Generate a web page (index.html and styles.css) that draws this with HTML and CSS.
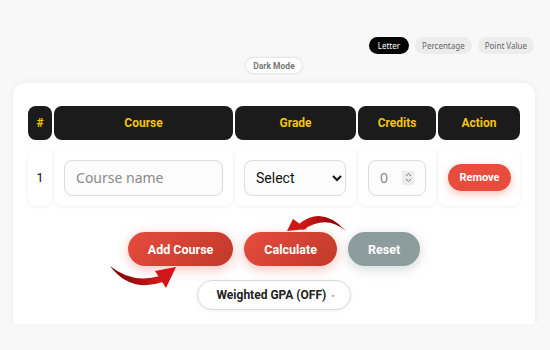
FILE: index.html
```html
<!DOCTYPE html>
<html>
<head>
  <meta charset="UTF-8">
  <title>GPA Calculator</title>
  <link rel="stylesheet" href="styles.css">
</head>
<body>
  <div class="modes">
    <button class="mode active">Letter</button>
    <button class="mode">Percentage</button>
    <button class="mode">Point Value</button>
  </div>
  <div class="theme-row">
    <button class="theme">Dark Mode</button>
  </div>

  <div class="card">
    <table class="courses">
      <thead>
        <tr>
          <th class="col-num">#</th>
          <th class="col-course">Course</th>
          <th class="col-grade">Grade</th>
          <th class="col-credits">Credits</th>
          <th class="col-action">Action</th>
        </tr>
      </thead>
      <tbody>
        <tr>
          <td class="num">1</td>
          <td><input class="field name" type="text" placeholder="Course name"></td>
          <td>
            <select class="field grade">
              <option>Select</option>
              <option>A</option>
              <option>B</option>
              <option>C</option>
            </select>
          </td>
          <td>
            <div class="field credits">
              <span class="credits-val">0</span>
              <span class="spin">
                <svg width="7" height="11" viewBox="0 0 7 11"><path d="M1 4 L3.5 1.5 L6 4 M1 7 L3.5 9.5 L6 7" fill="none" stroke="#777" stroke-width="1"/></svg>
              </span>
            </div>
          </td>
          <td class="act"><button class="remove">Remove</button></td>
        </tr>
      </tbody>
    </table>

    <div class="actions">
      <button class="btn red">Add Course</button>
      <button class="btn red">Calculate</button>
      <button class="btn gray">Reset</button>
    </div>
    <div class="weighted-row">
      <button class="weighted">Weighted GPA (OFF) <span class="dot">•</span></button>
    </div>

    <!-- hint arrows drawn over the buttons -->
    <svg class="arrows" viewBox="13 83 522 241" width="522" height="241">
      <defs>
        <linearGradient id="ar" x1="0" y1="0" x2="1" y2="0">
          <stop offset="0" stop-color="#7a0000"/>
          <stop offset="1" stop-color="#d81b1b"/>
        </linearGradient>
        <linearGradient id="ar2" x1="1" y1="0" x2="0" y2="0">
          <stop offset="0" stop-color="#7a0000"/>
          <stop offset="1" stop-color="#d81b1b"/>
        </linearGradient>
      </defs>
      <path d="M110 266 Q 132 284 160 276 L 163 282 Q 130 293 110 266 Z" fill="url(#ar)"/>
      <path d="M155 271 L 176 267 L 166 288 Z" fill="#d01616"/>
      <path d="M299 224 Q 322 205 346 231 Q 326 214 303 230 Z" fill="url(#ar2)"/>
      <path d="M287 231 L 293 219 L 307 229 Z" fill="#d01616"/>
    </svg>
  </div>
</body>
</html>
```

FILE: styles.css
```css
body {
  margin: 0;
  padding: 37px 15px 0 13px;
  background: #f8f8f8;
  font-family: Roboto, "Liberation Sans", sans-serif;
  color: #222;
}
button {
  font-family: inherit;
  cursor: pointer;
}
.modes {
  display: flex;
  justify-content: flex-end;
  gap: 6px;
  padding-right: 1px;
}
.mode {
  height: 17px;
  padding: 0 7px;
  border: none;
  border-radius: 9px;
  background: #ececec;
  color: #666;
  font-family: "Noto Sans", sans-serif;
  font-size: 8px;
}
.mode.active {
  background: #050505;
  color: #fff;
  padding: 0 9px;
}
.theme-row {
  display: flex;
  justify-content: center;
  margin-top: 4px;
}
.theme {
  height: 15px;
  padding: 0 7px;
  border: none;
  border-radius: 8px;
  background: #fff;
  color: #777;
  font-size: 8.5px;
  font-weight: bold;
  box-shadow: 0 0 3px rgba(0, 0, 0, 0.18);
}
.card {
  position: relative;
  margin-top: 10px;
  height: 241px;
  box-sizing: border-box;
  padding: 14px 13px 0 13px;
  background: #fff;
  border-radius: 12px 12px 0 0;
  box-shadow: 0 0 6px rgba(0, 0, 0, 0.05);
}
.courses {
  border-collapse: separate;
  border-spacing: 2px 9px;
}
.courses th {
  height: 34px;
  padding: 0;
  background: #1b1b1b;
  color: #f1c40f;
  font-size: 12px;
  font-weight: bold;
  border-radius: 8px;
}
.col-num { width: 25px; }
.col-course { width: 179px; }
.col-grade { width: 121px; }
.col-credits { width: 77px; }
.col-action { width: 83px; }
.courses td {
  height: 57px;
  padding: 0 10px 0 10px;
  box-sizing: border-box;
  background: #fff;
  border-radius: 8px;
  box-shadow: 0 1px 4px rgba(0, 0, 0, 0.06);
}
.courses td.num {
  padding: 0;
  text-align: center;
  font-size: 13px;
  color: #111;
}
.courses td.act {
  padding: 0 0 0 1px;
  text-align: center;
}
.field {
  display: block;
  box-sizing: border-box;
  height: 36px;
  border: 1px solid #dcdcdc;
  border-radius: 8px;
  background: #fcfcfc;
  font-family: "Noto Sans", sans-serif;
  font-size: 14px;
  outline: none;
}
.name {
  width: 159px;
  padding: 0 11px;
  color: #222;
}
.name::placeholder {
  color: #8a8a8a;
}
.grade {
  width: 102px;
  margin-left: -1px;
  padding: 0 4px 0 7px;
  color: #111;
  font-family: Roboto, sans-serif;
}
.credits {
  width: 58px;
  display: flex;
  align-items: center;
  justify-content: space-between;
  padding: 0 11px 0 11px;
  color: #888;
}
.spin {
  display: flex;
  align-items: center;
  justify-content: center;
  width: 12px;
  height: 14px;
  background: #ececec;
}
.remove {
  height: 27px;
  width: 63px;
  border: none;
  border-radius: 14px;
  background: #e74c3c;
  color: #fff;
  font-size: 11px;
  font-weight: bold;
  box-shadow: 0 3px 8px rgba(231, 76, 60, 0.35);
}
.actions {
  display: flex;
  justify-content: center;
  gap: 11px;
  margin-top: 17px;
}
.btn {
  height: 34px;
  border: none;
  border-radius: 17px;
  color: #fff;
  font-size: 12.5px;
  font-weight: bold;
  padding: 0 20px;
}
.btn.red {
  background: linear-gradient(135deg, #e74c3c, #c0392b);
  box-shadow: 0 3px 12px rgba(231, 76, 60, 0.35);
}
.btn.gray {
  background: #8d9c9d;
  box-shadow: 0 3px 12px rgba(127, 140, 141, 0.35);
}
.weighted-row {
  display: flex;
  justify-content: center;
  margin-top: 14px;
}
.weighted {
  height: 30px;
  padding: 0 16px 0 19px;
  border: 1px solid #d8d8d8;
  border-radius: 15px;
  background: #fff;
  color: #222;
  font-size: 12px;
  font-weight: bold;
  box-shadow: 0 1px 4px rgba(0, 0, 0, 0.06);
}
.dot {
  color: #aaa;
  font-size: 9px;
  margin-left: 2px;
}
.arrows {
  position: absolute;
  left: 0;
  top: 0;
  pointer-events: none;
}
```
